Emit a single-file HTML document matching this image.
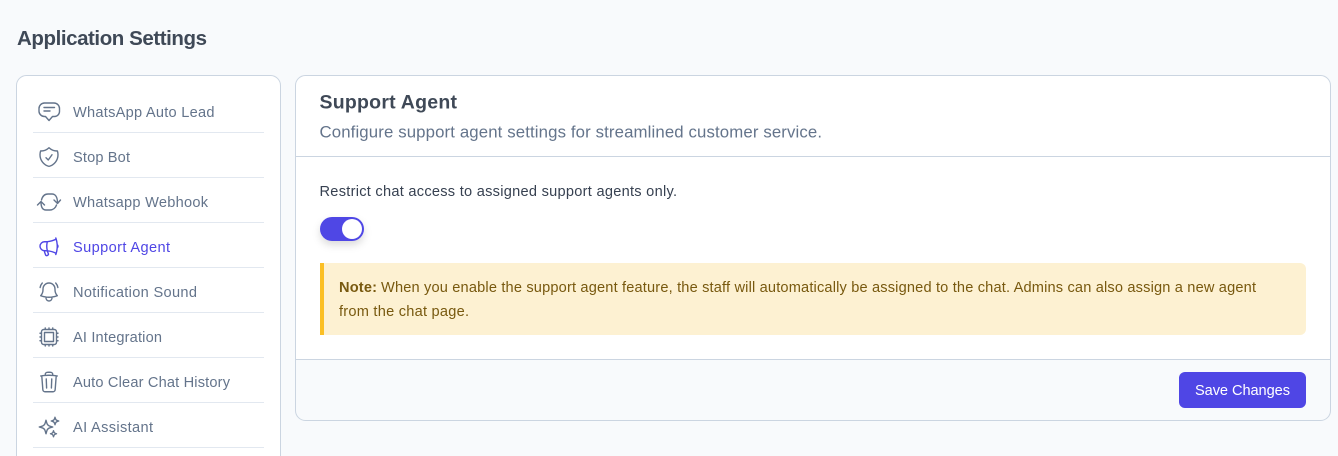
<!DOCTYPE html>
<html lang="en">
<head>
<meta charset="utf-8">
<title>Application Settings</title>
<style>
html,body{margin:0;padding:0;width:1338px;height:456px;overflow:hidden;background:#f8fafc}
svg{display:block}
text{font-family:"Liberation Sans",Arial,sans-serif}
.nav{font-size:14.6px;fill:#64748b}
.ic{fill:none;stroke:#64748b;stroke-width:1.4;stroke-linecap:round;stroke-linejoin:round}
.note{font-size:14.6px;fill:#78590f}
</style>
</head>
<body>
<svg width="1338" height="456" viewBox="0 0 1338 456" xmlns="http://www.w3.org/2000/svg">
<defs>
<filter id="sh" x="-30%" y="-50%" width="160%" height="220%"><feDropShadow dx="0" dy="4" stdDeviation="4" flood-color="#000" flood-opacity=".14"/></filter>
<clipPath id="foot"><rect x="295.500" y="75.500" width="1035" height="345" rx="10"/></clipPath>
</defs>
<rect width="1338" height="456" fill="#f8fafc"/>
<text x="17" y="45" font-size="20.500" font-weight="700" fill="#3f4957" textLength="190">Application Settings</text>

<!-- Sidebar -->
<path d="M16.500 456V85.500a10 10 0 0 1 10-10h244a10 10 0 0 1 10 10V456" fill="#fff" stroke="#cbd5e1"/>
<g fill="#e2e8f0">
<rect x="33" y="132" width="231" height="1"/><rect x="33" y="177" width="231" height="1"/><rect x="33" y="222" width="231" height="1"/><rect x="33" y="267" width="231" height="1"/><rect x="33" y="312" width="231" height="1"/><rect x="33" y="357" width="231" height="1"/><rect x="33" y="402" width="231" height="1"/><rect x="33" y="447" width="231" height="1"/>
</g>
<text class="nav" x="73" y="117" textLength="141.500">WhatsApp Auto Lead</text>
<text class="nav" x="73" y="162" textLength="57">Stop Bot</text>
<text class="nav" x="73" y="207" textLength="135">Whatsapp Webhook</text>
<text class="nav" x="73" y="252" textLength="97" style="fill:#4f46e5">Support Agent</text>
<text class="nav" x="73" y="297" textLength="124">Notification Sound</text>
<text class="nav" x="73" y="342" textLength="89">AI Integration</text>
<text class="nav" x="73" y="387" textLength="157">Auto Clear Chat History</text>
<text class="nav" x="73" y="432" textLength="80">AI Assistant</text>

<!-- Icons -->
<g class="ic">
<path d="M44 103h10a5.500 5.500 0 0 1 5.500 5.500v3a5 5 0 0 1-5 5h-2l-3.500 4-3.500-4h-1a5.500 5.500 0 0 1-5.500-5v-3a5.500 5.500 0 0 1 5.500-5.500Z"/>
<path d="M44 107.500h10.500M44 111h6"/>
<path transform="translate(37 145)" d="M9 12.750 11.250 15 15 9.750m-3-7.036A11.959 11.959 0 0 1 3.598 6 11.990 11.990 0 0 0 3 9.749c0 5.592 3.824 10.290 9 11.623 5.176-1.332 9-6.030 9-11.622 0-1.310-.210-2.571-.598-3.751h-.152c-3.196 0-6.100-1.248-8.250-3.285Z"/>
<path d="M41.500 200C42.500 196 45 194 48 194H52C55 194 57.500 196.500 57.500 203M54 200l3.500 3.500 3-3.500"/>
<path d="M56.500 205C55.500 208 53 210 50 210H46C43 210 41 207.500 41 202M37.500 205l3.500-3.500 3.500 3.500"/>
<path transform="translate(37 235)" style="stroke:#4f46e5" d="M10.340 15.840c-.688-.060-1.386-.090-2.090-.090H7.500a4.500 4.500 0 1 1 0-9h.750c.704 0 1.402-.030 2.090-.090m0 9.180c.253.962.584 1.892.985 2.783.247.550.060 1.210-.463 1.511l-.657.380c-.551.318-1.260.117-1.527-.461a20.845 20.845 0 0 1-1.440-4.282m3.102.069a18.030 18.030 0 0 1-.590-4.590c0-1.586.205-3.124.590-4.590m0 9.180a23.848 23.848 0 0 1 8.835 2.535M10.340 6.660a23.847 23.847 0 0 0 8.835-2.535m0 0A23.740 23.740 0 0 0 18.795 3m.380 1.125a23.910 23.910 0 0 1 1.014 5.395m-1.014 8.855c-.118.380-.245.754-.380 1.125m.380-1.125a23.910 23.910 0 0 0 1.014-5.395m0-3.460c.495.413.811 1.035.811 1.730 0 .695-.316 1.317-.811 1.730m0-3.460a24.347 24.347 0 0 1 0 3.460"/>
<path transform="translate(37 280)" d="M14.857 17.082a23.848 23.848 0 0 0 5.454-1.310A8.967 8.967 0 0 1 18 9.750V9A6 6 0 0 0 6 9v.750a8.967 8.967 0 0 1-2.312 6.022c1.733.640 3.560 1.085 5.455 1.310m5.714 0a24.255 24.255 0 0 1-5.714 0m5.714 0a3 3 0 1 1-5.714 0M3.124 7.500A8.969 8.969 0 0 1 5.292 3m13.416 0a8.969 8.969 0 0 1 2.168 4.500"/>
<path transform="translate(37 325)" d="M8.250 3v1.500M4.500 8.250H3m18 0h-1.500M4.500 12H3m18 0h-1.500m-15 3.750H3m18 0h-1.500M8.250 19.500V21M12 3v1.500m0 15V21m3.750-18v1.500m0 15V21m-9-1.500h10.500a2.250 2.250 0 0 0 2.250-2.250V6.750a2.250 2.250 0 0 0-2.250-2.250H6.750A2.250 2.250 0 0 0 4.500 6.750v10.500a2.250 2.250 0 0 0 2.250 2.250Zm.750-12h9v9h-9v-9Z"/>
<path transform="translate(37 370)" d="m14.740 9-.346 9m-4.788 0L9.260 9m9.968-3.210c.342.052.682.107 1.022.166m-1.022-.165L18.160 19.673a2.250 2.250 0 0 1-2.244 2.077H8.084a2.250 2.250 0 0 1-2.244-2.077L4.772 5.790m14.456 0a48.108 48.108 0 0 0-3.478-.397m-12 .562c.340-.059.680-.114 1.022-.165m0 0a48.110 48.110 0 0 1 3.478-.397m7.500 0v-.916c0-1.180-.910-2.164-2.090-2.201a51.964 51.964 0 0 0-3.320 0c-1.180.037-2.090 1.022-2.090 2.201v.916m7.500 0a48.667 48.667 0 0 0-7.500 0"/>
<path transform="translate(37 415)" d="M9.813 15.904 9 18.750l-.813-2.846a4.500 4.500 0 0 0-3.090-3.090L2.250 12l2.846-.813a4.500 4.500 0 0 0 3.090-3.090L9 5.250l.813 2.846a4.500 4.500 0 0 0 3.090 3.090L15.750 12l-2.846.813a4.500 4.500 0 0 0-3.090 3.090ZM18.259 8.715 18 9.750l-.259-1.035a3.375 3.375 0 0 0-2.455-2.456L14.250 6l1.036-.259a3.375 3.375 0 0 0 2.455-2.456L18 2.250l.259 1.035a3.375 3.375 0 0 0 2.456 2.456L21.750 6l-1.035.259a3.375 3.375 0 0 0-2.456 2.456ZM16.894 20.567 16.500 21.750l-.394-1.183a2.250 2.250 0 0 0-1.423-1.423L13.500 18.750l1.183-.394a2.250 2.250 0 0 0 1.423-1.423l.394-1.183.394 1.183a2.250 2.250 0 0 0 1.423 1.423l1.183.394-1.183.394a2.250 2.250 0 0 0-1.423 1.423Z"/>
</g>

<!-- Main card -->
<rect x="295.500" y="75.500" width="1035" height="345" rx="10" fill="#fff"/>
<rect x="295" y="359" width="1036" height="62" fill="#f8fafc" clip-path="url(#foot)"/>
<rect x="295.500" y="75.500" width="1035" height="345" rx="10" fill="none" stroke="#cbd5e1"/>
<rect x="296" y="156" width="1034" height="1" fill="#cbd5e1"/>
<rect x="296" y="359" width="1034" height="1" fill="#cbd5e1"/>

<text x="319.500" y="108.500" font-size="19.500" font-weight="700" fill="#3f4957" textLength="137.500">Support Agent</text>
<text x="319.500" y="137.500" font-size="16.800" fill="#64748b" textLength="502.500">Configure support agent settings for streamlined customer service.</text>
<text x="319.500" y="196" font-size="14.600" fill="#374151" textLength="357.500">Restrict chat access to assigned support agents only.</text>

<!-- Toggle -->
<rect x="320" y="217" width="44" height="24" rx="12" fill="#4f46e5" filter="url(#sh)"/>
<circle cx="352" cy="229" r="10" fill="#fff"/>

<!-- Note -->
<rect x="320" y="263" width="986" height="72" rx="6" fill="#fdf1d2"/>
<path d="M324 263v72h-4v-72Z" fill="#fbbf24"/>
<text class="note" x="339" y="292" font-weight="700" textLength="38">Note:</text>
<text class="note" x="381" y="292" textLength="875">When you enable the support agent feature, the staff will automatically be assigned to the chat. Admins can also assign a new agent</text>
<text class="note" x="339" y="316" textLength="130">from the chat page.</text>

<!-- Button -->
<rect x="1179" y="372" width="127" height="36" rx="6" fill="#4f46e5"/>
<text x="1195" y="395" font-size="14.600" fill="#fff" textLength="95">Save Changes</text>
</svg>
</body>
</html>
